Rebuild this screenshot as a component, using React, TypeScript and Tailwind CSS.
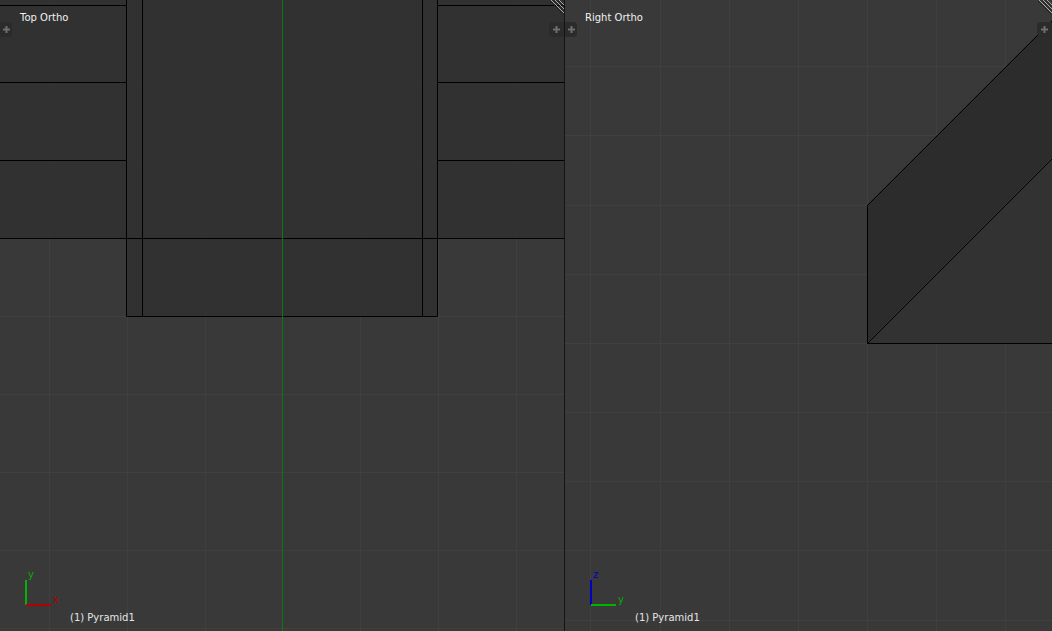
const Plus = () => (
  <svg width="7" height="7" viewBox="0 0 7 7">
    <path d="M3.5 0v7M0 3.5h7" stroke="#6f6f6f" strokeWidth="2" />
  </svg>
);

const Hatch = () => (
  <svg className="absolute right-0 top-0" width="14" height="14" viewBox="0 0 14 14">
    <path d="M1 0l13 13M5 0l9 9M9 0l5 5" stroke="#a8a8a8" strokeWidth="1" />
    <path d="M0 1l13 13M4 0.5l10 10M8 0.5l6 6" stroke="#222" strokeWidth="1" />
  </svg>
);

const Grid = ({ xs, ys }: { xs: number[]; ys: number[] }) => (
  <>
    {xs.map((x) => (
      <path key={`x${x}`} d={`M${x + 0.5} 0V631`} stroke="#404040" strokeWidth="1" />
    ))}
    {ys.map((y) => (
      <path key={`y${y}`} d={`M0 ${y + 0.5}H600`} stroke="#404040" strokeWidth="1" />
    ))}
  </>
);

const TopView = () => (
  <svg className="absolute inset-0" width="564" height="631" viewBox="0 0 564 631">
    <Grid xs={[49, 127, 205, 360, 438, 516]} ys={[82, 160, 238, 316, 394, 472, 550, 628]} />
    <g fill="#303030" fillOpacity="0.85">
      <rect x="0" y="0" width="564" height="238" />
      <rect x="127" y="238" width="310" height="78" />
    </g>
    <path
      d="M0 5.5H127M437 5.5H564M0 82.5H127M437 82.5H564M0 160.5H127M437 160.5H564M0 238.5H564M126.5 0V316.5H437.5V0M142.5 0V316M422.5 0V316"
      fill="none"
      stroke="#000"
      strokeWidth="1"
    />
    <path d="M282.5 0V631" stroke="#0a7a0a" strokeWidth="1" />
    <path d="M26 605V580" stroke="#00b400" strokeWidth="2" />
    <path d="M26 605H51" stroke="#b40000" strokeWidth="2" />
  </svg>
);

const SideView = () => (
  <svg className="absolute inset-0" width="487" height="631" viewBox="0 0 487 631">
    <Grid xs={[25, 95, 164, 233, 302, 371, 440]} ys={[66, 135, 205, 274, 343, 412, 481, 550, 620]} />
    <path d="M302 205L487 20V158L302 343Z" fill="#2b2b2b" fillOpacity="0.92" />
    <path d="M302 343L487 158V343Z" fill="#313131" fillOpacity="0.85" />
    <path d="M302.5 343.5V205.5L487 21M302.5 343.5L487 159M302 343.5H487" fill="none" stroke="#000" strokeWidth="1" />
    <path d="M26 605V580" stroke="#0000c0" strokeWidth="2" />
    <path d="M26 605H51" stroke="#00b400" strokeWidth="2" />
  </svg>
);

const Viewport = ({
  title,
  width,
  axisV,
  axisH,
  colorV,
  colorH,
  children,
}: {
  title: string;
  width: string;
  axisV: string;
  axisH: string;
  colorV: string;
  colorH: string;
  children: React.ReactNode;
}) => (
  <div className={`relative h-full overflow-hidden bg-[#393939] ${width} font-['DejaVu_Sans',sans-serif] text-[10px] leading-[12px]`}>
    {children}
    <Hatch />
    <div className="relative flex h-full flex-col">
      <div className="pl-5 pt-3 text-[#f2f2f2]">{title}</div>
      <div className="mt-[-2px] flex justify-between">
        <div className="flex h-[15px] w-[12px] items-center justify-center rounded-r-[4px] bg-[#2b2b2b]">
          <Plus />
        </div>
        <div className="flex h-[15px] w-[15px] items-center justify-center rounded-l-[4px] bg-[#2b2b2b]">
          <Plus />
        </div>
      </div>
      <div className="mt-auto flex flex-col pb-[7px]">
        <span className={`pl-[28px] ${colorV}`}>{axisV}</span>
        <span className={`mt-[13px] pl-[53px] ${colorH}`}>{axisH}</span>
        <span className="mt-[6px] pl-[70px] text-[#e6e6e6]">(1) Pyramid1</span>
      </div>
    </div>
  </div>
);

export default function App() {
  return (
    <div className="flex h-[631px] w-[1052px] overflow-hidden bg-[#141414]">
      <Viewport title="Top Ortho" width="w-[564px]" axisV="y" axisH="x" colorV="text-[#00b000]" colorH="text-[#b00000]">
        <TopView />
      </Viewport>
      <div className="w-px bg-[#141414]" />
      <Viewport title="Right Ortho" width="w-[487px]" axisV="z" axisH="y" colorV="text-[#0000c0]" colorH="text-[#00b000]">
        <SideView />
      </Viewport>
    </div>
  );
}
